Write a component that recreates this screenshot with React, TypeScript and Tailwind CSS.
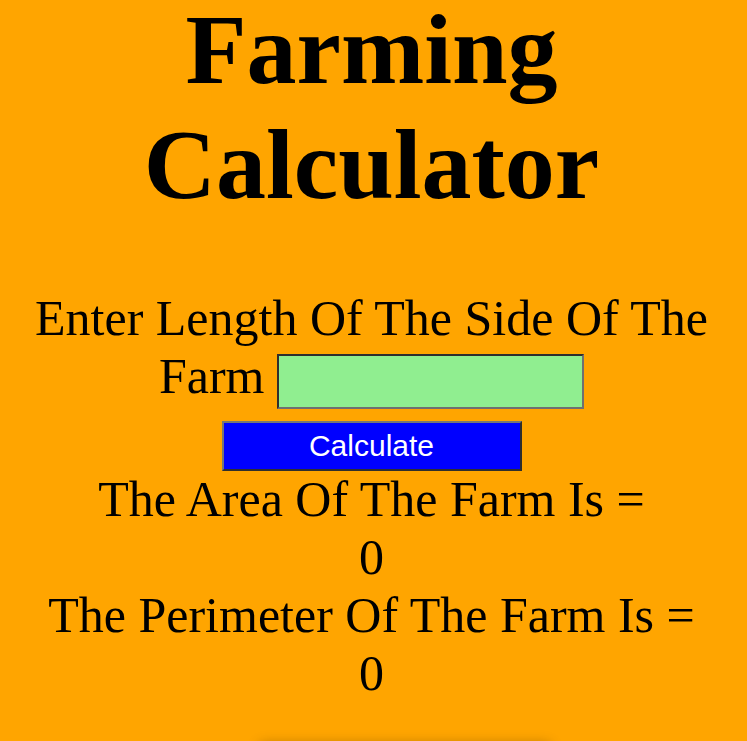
import { useState } from "react";

export default function App() {
  const [side, setSide] = useState("");
  const [area, setArea] = useState(0);
  const [perimeter, setPerimeter] = useState(0);

  const calculate = () => {
    const s = parseFloat(side) || 0;
    setArea(s * s);
    setPerimeter(4 * s);
  };

  return (
    <div className="min-h-screen overflow-hidden bg-[#FFA500] pr-1 text-center font-['Liberation_Serif','Times_New_Roman',serif] text-black">
      <h1 className="-mt-2 text-[100px] font-bold leading-[115px]">
        Farming Calculator
      </h1>

      <p className="mt-[67px] px-2 text-[50px] leading-[58px]">
        Enter Length Of The Side Of The Farm{" "}
        <input
          type="text"
          value={side}
          onChange={(e) => setSide(e.target.value)}
          className="h-[55px] w-[307px] border-2 border-t-[#2e2e2e] border-l-[#2e2e2e] border-r-[#707070] border-b-[#707070] bg-[#90EE90] align-middle text-[20px] outline-none"
        />
      </p>

      <button
        onClick={calculate}
        className="mx-auto mt-[12px] block h-[50px] w-[300px] border-2 border-t-[#767676] border-l-[#767676] border-r-[#2e2e2e] border-b-[#2e2e2e] bg-[#0000FF] font-['Liberation_Sans',Arial,sans-serif] text-[30px] leading-none text-white"
      >
        Calculate
      </button>

      <div className="-mt-px text-[50px] leading-[58px]">
        <p>The Area Of The Farm Is =</p>
        <p>{area}</p>
        <p>The Perimeter Of The Farm Is =</p>
        <p>{perimeter}</p>
      </div>

      <div className="ml-[260px] mt-[42px] h-[60px] w-[290px] bg-[#FFA500] shadow-[0_0_12px_rgba(0,0,0,0.3)]" />
    </div>
  );
}
